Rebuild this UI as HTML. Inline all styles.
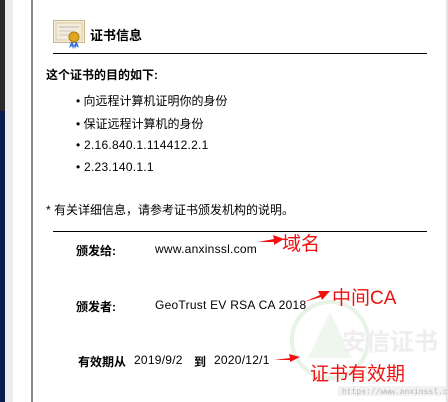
<!DOCTYPE html>
<html><head><meta charset="utf-8"><style>
*{margin:0;padding:0;box-sizing:border-box}
body{width:448px;height:402px;position:relative;overflow:hidden;background:#fff;font-family:"Liberation Sans","Noto Sans CJK SC",sans-serif;font-size:12px;color:#000}
.a{position:absolute;white-space:nowrap}
.b{font-weight:bold}
.r{color:#f01010;font-size:19px}
.l{letter-spacing:0.25px}
</style></head><body>
<div class="a" style="left:0;top:0;width:5px;height:111px;background:#2a2a2a"></div>
<div class="a" style="left:0;top:111px;width:5px;height:291px;background:#0c1c4c"></div>
<div class="a" style="left:5px;top:0;width:8px;height:402px;background:#ececec"></div>
<div class="a" style="left:31px;top:0;width:2px;height:402px;background:#8a8a8a"></div>
<div class="a" style="left:446px;top:0;width:2px;height:402px;background:#e4e4e4"></div>
<svg class="a" style="left:53px;top:20px" width="32" height="29" viewBox="0 0 32 29">
<rect x="0.5" y="0.5" width="31" height="22" fill="#f3ecd9" stroke="#c8b88e"/>
<rect x="3" y="3" width="26" height="17" fill="none" stroke="#d8cca8"/>
<line x1="6" y1="7" x2="26" y2="7" stroke="#b9b9b9"/><line x1="6" y1="11" x2="20" y2="11" stroke="#c9c9c9"/><line x1="6" y1="15" x2="17" y2="15" stroke="#c9c9c9"/>
<path d="M18 22l-2 6 3-2 1 3 2-6zM24 22l2 6-3-2-1 3-2-6z" fill="#3a72d8"/>
<circle cx="21" cy="17" r="5" fill="#e0a820" stroke="#b07810"/>
</svg>
<div class="a b" style="left:90px;top:25px;font-size:13px">证书信息</div>
<div class="a" style="left:53px;top:53px;width:374px;height:1px;background:#000"></div>
<div class="a b" style="left:46px;top:66px">这个证书的目的如下:</div>
<div class="a" style="left:76px;top:92px">• 向远程计算机证明你的身份</div>
<div class="a" style="left:76px;top:115px">• 保证远程计算机的身份</div>
<div class="a l" style="left:76px;top:138px">• 2.16.840.1.114412.2.1</div>
<div class="a l" style="left:76px;top:160px">• 2.23.140.1.1</div>
<div class="a" style="left:46px;top:201px">* 有关详细信息，请参考证书颁发机构的说明。</div>
<div class="a" style="left:53px;top:231px;width:374px;height:1px;background:#000"></div>
<svg class="a" style="left:250px;top:300px" width="198" height="102" viewBox="0 0 198 102">
<circle cx="80" cy="40" r="38" fill="none" stroke="#e6f3e6" stroke-width="4"/>
<path d="M80 12L58 58h44z" fill="#eef6ee"/>
<text x="92" y="50" font-size="24" font-weight="bold" fill="#eeeeee" font-family="Liberation Sans,Noto Sans CJK SC,sans-serif">安信证书</text>
<text x="100" y="80" font-size="24" fill="#edf5ed" font-family="Liberation Sans,sans-serif">ust</text>
<rect x="88" y="86" width="108" height="10" fill="#f2f2f2"/>
<text x="92" y="94" font-size="8" fill="#b8b8b8" font-family="Liberation Mono,monospace">https://www.anxinssl.com/</text>
</svg>
<div class="a b" style="left:76px;top:242px">颁发给:</div>
<div class="a l" style="left:155px;top:242px">www.anxinssl.com</div>
<div class="a b" style="left:76px;top:298px">颁发者:</div>
<div class="a l" style="left:155px;top:298px">GeoTrust EV RSA CA 2018</div>
<div class="a b" style="left:78px;top:353px">有效期从</div>
<div class="a l" style="left:134px;top:353px">2019/9/2</div>
<div class="a b" style="left:194px;top:353px">到</div>
<div class="a l" style="left:214px;top:353px">2020/12/1</div>
<svg class="a" style="left:256px;top:232px" width="30" height="15"><path d="M2 10L18 7L17 3L28 7L18 13L18 10Z" fill="#f01010"/></svg>
<svg class="a" style="left:302px;top:286px" width="30" height="20"><path d="M2 16L18 9L16 5L28 5L20 14L19 11Z" fill="#f01010"/></svg>
<svg class="a" style="left:272px;top:350px" width="30" height="15"><path d="M2 10L18 8L17 4L28 7L18 12L18 10Z" fill="#f01010"/></svg>
<div class="a r" style="left:282px;top:229px">域名</div>
<div class="a r" style="left:332px;top:283px">中间CA</div>
<div class="a r" style="left:310px;top:359px">证书有效期</div>
</body></html>
